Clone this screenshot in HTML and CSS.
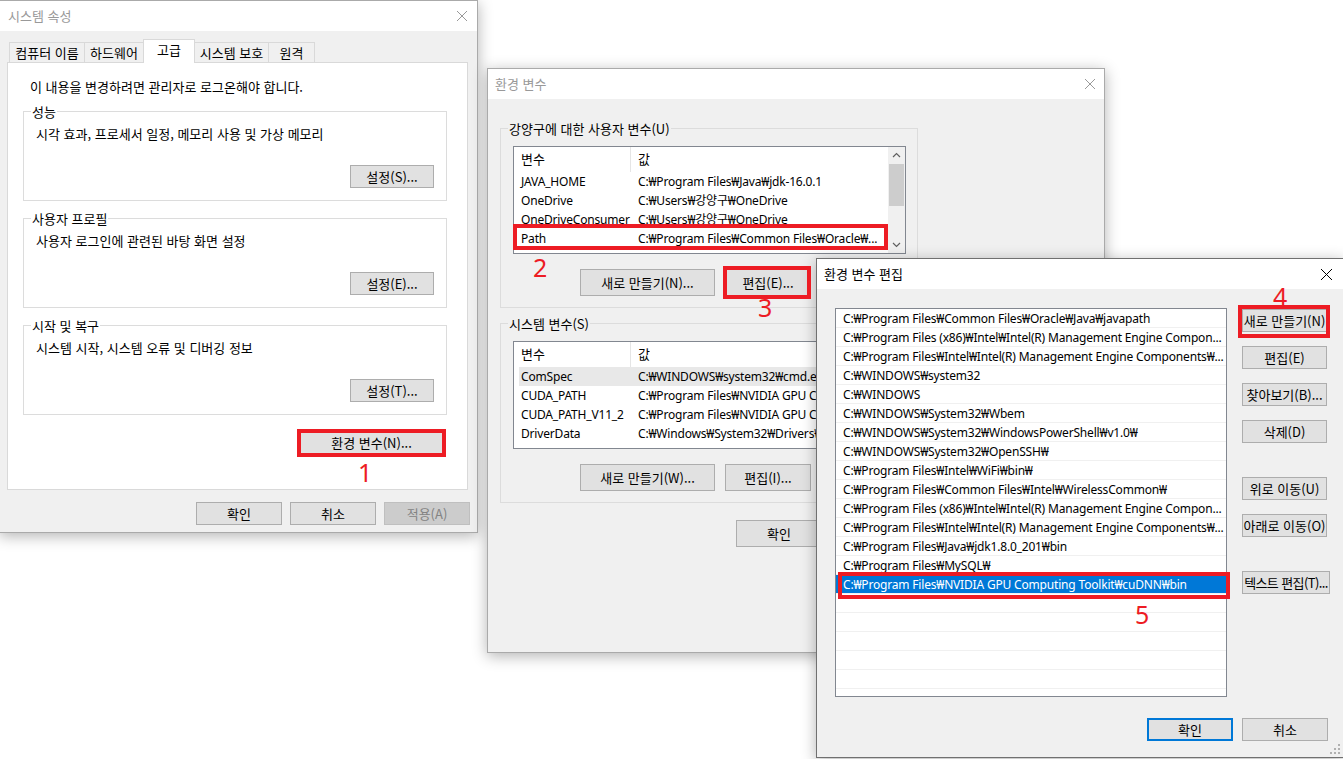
FILE: index.html
```html
<!DOCTYPE html>
<html lang="ko">
<head>
  <meta charset="UTF-8" />
  <title>환경 변수 설정</title>
  <link rel="stylesheet" href="styles.css">
</head>
<body>
<div class="desktop">

  <!-- 시스템 속성 -->
  <div class="window win-system">
    <div class="titlebar">
      <span>시스템 속성</span>
      <svg class="close" width="10" height="10" viewBox="0 0 10 10"><path d="M0 0L10 10M10 0L0 10"/></svg>
    </div>
    <div class="sys-body">
      <div class="tabs">
        <div class="tab tab-name">컴퓨터 이름</div>
        <div class="tab tab-hw">하드웨어</div>
        <div class="tab active">고급</div>
        <div class="tab tab-protect">시스템 보호</div>
        <div class="tab tab-remote">원격</div>
      </div>
      <div class="tab-panel">
        <p class="note">이 내용을 변경하려면 관리자로 로그온해야 합니다.</p>
        <div class="group">
          <span class="group-label">성능</span>
          <div class="group-text">시각 효과, 프로세서 일정, 메모리 사용 및 가상 메모리</div>
          <button class="btn btn-set">설정(S)...</button>
        </div>
        <div class="group">
          <span class="group-label">사용자 프로필</span>
          <div class="group-text">사용자 로그인에 관련된 바탕 화면 설정</div>
          <button class="btn btn-set">설정(E)...</button>
        </div>
        <div class="group">
          <span class="group-label">시작 및 복구</span>
          <div class="group-text">시스템 시작, 시스템 오류 및 디버깅 정보</div>
          <button class="btn btn-set">설정(T)...</button>
        </div>
        <button class="btn btn-env">환경 변수(N)...</button>
      </div>
      <div class="dialog-buttons">
        <button class="btn btn-dlg">확인</button>
        <button class="btn btn-dlg">취소</button>
        <button class="btn btn-dlg" disabled>적용(A)</button>
      </div>
    </div>
  </div>

  <!-- 환경 변수 -->
  <div class="window win-env">
    <div class="titlebar">
      <span>환경 변수</span>
      <svg class="close" width="10" height="10" viewBox="0 0 10 10"><path d="M0 0L10 10M10 0L0 10"/></svg>
    </div>
    <div class="env-body">
      <div class="env-group">
        <span class="group-label">강양구에 대한 사용자 변수(U)</span>
        <div class="listview">
          <div class="lv-main">
            <div class="lv-row lv-head"><span class="lv-name">변수</span><span class="lv-value">값</span></div>
            <div class="lv-row"><span class="lv-name">JAVA_HOME</span><span class="lv-value">C:₩Program Files₩Java₩jdk-16.0.1</span></div>
            <div class="lv-row"><span class="lv-name">OneDrive</span><span class="lv-value">C:₩Users₩강양구₩OneDrive</span></div>
            <div class="lv-row"><span class="lv-name">OneDriveConsumer</span><span class="lv-value">C:₩Users₩강양구₩OneDrive</span></div>
            <div class="lv-row"><span class="lv-name">Path</span><span class="lv-value">C:₩Program Files₩Common Files₩Oracle₩...</span></div>
          </div>
          <div class="scrollbar">
            <svg width="17" height="17" viewBox="0 0 17 17"><path d="M5 10L8.5 6.5L12 10"/></svg>
            <div class="thumb"></div>
            <svg class="down" width="17" height="17" viewBox="0 0 17 17"><path d="M5 7L8.5 10.5L12 7"/></svg>
          </div>
        </div>
        <div class="env-actions">
          <button class="btn btn-new">새로 만들기(N)...</button>
          <button class="btn btn-edit">편집(E)...</button>
        </div>
      </div>

      <div class="env-group">
        <span class="group-label">시스템 변수(S)</span>
        <div class="listview">
          <div class="lv-main">
            <div class="lv-row lv-head"><span class="lv-name">변수</span><span class="lv-value">값</span></div>
            <div class="lv-row hot"><span class="lv-name">ComSpec</span><span class="lv-value">C:₩WINDOWS₩system32₩cmd.exe</span></div>
            <div class="lv-row"><span class="lv-name">CUDA_PATH</span><span class="lv-value">C:₩Program Files₩NVIDIA GPU Computing Toolkit₩CUDA₩v11.2</span></div>
            <div class="lv-row"><span class="lv-name">CUDA_PATH_V11_2</span><span class="lv-value">C:₩Program Files₩NVIDIA GPU Computing Toolkit₩CUDA₩v11.2</span></div>
            <div class="lv-row"><span class="lv-name">DriverData</span><span class="lv-value">C:₩Windows₩System32₩Drivers₩DriverData</span></div>
          </div>
        </div>
        <div class="env-actions">
          <button class="btn btn-new">새로 만들기(W)...</button>
          <button class="btn btn-edit">편집(I)...</button>
        </div>
      </div>

      <div class="env-footer">
        <button class="btn btn-edit">확인</button>
        <button class="btn btn-edit">취소</button>
      </div>
    </div>
  </div>

  <!-- 환경 변수 편집 -->
  <div class="window win-edit">
    <div class="titlebar">
      <span>환경 변수 편집</span>
      <svg class="close" width="11" height="11" viewBox="0 0 11 11"><path d="M0 0L11 11M11 0L0 11"/></svg>
    </div>
    <div class="edit-body">
      <div class="edit-main">
        <div class="path-list">
          <div class="path-row">C:₩Program Files₩Common Files₩Oracle₩Java₩javapath</div>
          <div class="path-row">C:₩Program Files (x86)₩Intel₩Intel(R) Management Engine Compon...</div>
          <div class="path-row">C:₩Program Files₩Intel₩Intel(R) Management Engine Components₩...</div>
          <div class="path-row">C:₩WINDOWS₩system32</div>
          <div class="path-row">C:₩WINDOWS</div>
          <div class="path-row">C:₩WINDOWS₩System32₩Wbem</div>
          <div class="path-row">C:₩WINDOWS₩System32₩WindowsPowerShell₩v1.0₩</div>
          <div class="path-row">C:₩WINDOWS₩System32₩OpenSSH₩</div>
          <div class="path-row">C:₩Program Files₩Intel₩WiFi₩bin₩</div>
          <div class="path-row">C:₩Program Files₩Common Files₩Intel₩WirelessCommon₩</div>
          <div class="path-row">C:₩Program Files (x86)₩Intel₩Intel(R) Management Engine Compon...</div>
          <div class="path-row">C:₩Program Files₩Intel₩Intel(R) Management Engine Components₩...</div>
          <div class="path-row">C:₩Program Files₩Java₩jdk1.8.0_201₩bin</div>
          <div class="path-row">C:₩Program Files₩MySQL₩</div>
          <div class="path-row selected">C:₩Program Files₩NVIDIA GPU Computing Toolkit₩cuDNN₩bin</div>
          <div class="path-row"></div>
          <div class="path-row"></div>
          <div class="path-row"></div>
          <div class="path-row"></div>
          <div class="path-row"></div>
          <div class="path-row"></div>
        </div>
        <div class="edit-actions">
          <button class="btn btn-side">새로 만들기(N)</button>
          <button class="btn btn-side">편집(E)</button>
          <button class="btn btn-side">찾아보기(B)...</button>
          <button class="btn btn-side">삭제(D)</button>
          <button class="btn btn-side spaced">위로 이동(U)</button>
          <button class="btn btn-side">아래로 이동(O)</button>
          <button class="btn btn-side spaced wide">텍스트 편집(T)...</button>
        </div>
      </div>
      <div class="edit-footer">
        <button class="btn btn-dlg default">확인</button>
        <button class="btn btn-dlg">취소</button>
      </div>
    </div>
    <svg class="grip" width="12" height="12" viewBox="0 0 12 12">
      <rect x="9" y="1" width="2" height="2"/><rect x="5" y="5" width="2" height="2"/><rect x="9" y="5" width="2" height="2"/>
      <rect x="1" y="9" width="2" height="2"/><rect x="5" y="9" width="2" height="2"/><rect x="9" y="9" width="2" height="2"/>
    </svg>
  </div>

  <!-- 빨간 표시 -->
  <div class="mark mark-1"></div>
  <div class="mark mark-2"></div>
  <div class="mark mark-3"></div>
  <div class="mark mark-4"></div>
  <div class="mark mark-5"></div>
  <span class="step step-1">1</span>
  <span class="step step-2">2</span>
  <span class="step step-3">3</span>
  <span class="step step-4">4</span>
  <span class="step step-5">5</span>

</div>
</body>
</html>
```

FILE: styles.css
```css
* {
  box-sizing: border-box;
}
body {
  margin: 0;
  background: #fff;
  font-family: "Noto Sans CJK KR", "Noto Sans", sans-serif;
  font-size: 13px;
  line-height: 16px;
  color: #000;
}
.desktop {
  position: relative;
  width: 1343px;
  height: 759px;
  overflow: hidden;
  background: #fff;
}

/* windows */
.window {
  position: absolute;
  display: flex;
  flex-direction: column;
  background: #f0f0f0;
  border: 1px solid #aaa;
  box-shadow: 0 3px 14px rgba(0,0,0,0.3);
}
.win-system {
  left: -1px;
  top: 0;
  width: 479px;
  height: 533px;
}
.win-env {
  left: 487px;
  top: 68px;
  width: 618px;
  height: 585px;
}
.win-edit {
  left: 816px;
  top: 258px;
  width: 528px;
  height: 500px;
  border-color: #707070;
}
.titlebar {
  flex: none;
  height: 30px;
  background: #fff;
  color: #999;
  display: flex;
  align-items: center;
  justify-content: space-between;
  padding: 0 10px 0 8px;
}
.win-env .titlebar {
  padding: 0 9px 0 7px;
}
.win-edit .titlebar {
  color: #000;
  padding: 0 11px 0 7px;
}
.close path {
  stroke: currentColor;
  stroke-width: 1;
  fill: none;
}

/* buttons */
.btn {
  font: inherit;
  height: 23px;
  padding: 0;
  background: #e1e1e1;
  border: 1px solid #adadad;
  color: #000;
  white-space: nowrap;
  overflow: hidden;
}
.btn:disabled {
  background: #cccccc;
  border-color: #bfbfbf;
  color: #838383;
}
.btn.default {
  border: 2px solid #0078d7;
}

/* 시스템 속성 */
.sys-body {
  flex: 1;
  padding: 8px 7px 0 7px;
}
.tabs {
  position: relative;
  z-index: 1;
  display: flex;
  align-items: flex-end;
  height: 23px;
  padding-left: 2px;
}
.tab {
  height: 20px;
  margin-right: -1px;
  border: 1px solid #d9d9d9;
  border-bottom: none;
  background: #f0f0f0;
  text-align: center;
  line-height: 19px;
  white-space: nowrap;
}
.tab-name { width: 76px; }
.tab-hw { width: 60px; }
.tab-protect { width: 75px; }
.tab-remote { width: 47px; }
.tab.active {
  width: 52px;
  height: 24px;
  margin-bottom: -1px;
  background: #fff;
  line-height: 19px;
}
.tab-panel {
  width: 461px;
  height: 428px;
  background: #fff;
  border: 1px solid #d9d9d9;
  padding: 16px 20px 0 15px;
  display: flex;
  flex-direction: column;
}
.note {
  margin: 0 0 0 7px;
}
.group {
  position: relative;
  height: 90px;
  margin-top: 17px;
  border: 1px solid #dcdcdc;
  padding: 14px 12px 12px 12px;
  display: flex;
  flex-direction: column;
}
.note + .group {
  margin-top: 16px;
}
.group-label {
  position: absolute;
  top: -8px;
  left: 7px;
  padding: 0 1px;
  background: #fff;
}
.btn-set {
  width: 84px;
  margin-top: auto;
  align-self: flex-end;
}
.btn-env {
  width: 145px;
  height: 24px;
  margin: 16px 3px 0 0;
  align-self: flex-end;
}
.dialog-buttons {
  display: flex;
  justify-content: flex-end;
  gap: 8px;
  margin-top: 12px;
}
.btn-dlg {
  width: 86px;
}

/* 환경 변수 */
.env-body {
  flex: 1;
  padding: 29px 0 0 12px;
}
.env-group {
  position: relative;
  width: 418px;
  height: 180px;
  border: 1px solid #dcdcdc;
  padding: 17px 0 0 12px;
}
.env-group + .env-group {
  margin-top: 15px;
}
.env-group .group-label {
  background: #f0f0f0;
}
.listview {
  display: flex;
  width: 393px;
  height: 108px;
  background: #fff;
  border: 1px solid #828790;
  overflow: hidden;
}
.lv-main {
  flex: 1;
  min-width: 0;
}
.lv-row,
.path-row {
  font-family: "Noto Sans", "Noto Sans CJK KR", sans-serif;
  font-size: 12px;
  letter-spacing: -0.18px;
}
.lv-row {
  display: flex;
  height: 19px;
  line-height: 19px;
  margin-left: 5px;
  white-space: nowrap;
}
.lv-row.hot {
  background: #e8e8e8;
}
.lv-row.lv-head {
  height: 25px;
  line-height: 24px;
  font-family: "Noto Sans CJK KR", sans-serif;
  font-size: 13px;
  letter-spacing: 0;
}
.lv-name {
  flex: none;
  width: 112px;
  padding-left: 2px;
  overflow: hidden;
}
.lv-head .lv-name {
  border-right: 1px solid #e5e5e5;
}
.lv-value {
  padding-left: 7px;
  overflow: hidden;
}
.scrollbar {
  flex: none;
  width: 17px;
  background: #f0f0f0;
  display: flex;
  flex-direction: column;
}
.scrollbar svg path {
  fill: none;
  stroke: #606060;
  stroke-width: 1.2;
}
.scrollbar .thumb {
  height: 42px;
  margin: 0 1px;
  background: #cdcdcd;
}
.scrollbar .down {
  margin-top: auto;
}
.env-actions {
  display: flex;
  gap: 10px;
  margin-top: 15px;
  padding-left: 67px;
}
.btn-new {
  width: 135px;
  height: 27px;
}
.btn-edit {
  width: 86px;
  height: 27px;
}
.env-footer {
  display: flex;
  gap: 10px;
  margin-top: 17px;
  padding-left: 236px;
}

/* 환경 변수 편집 */
.edit-body {
  flex: 1;
  padding: 19px 0 0 18px;
}
.edit-main {
  display: flex;
  gap: 15px;
}
.path-list {
  width: 392px;
  height: 389px;
  background: #fff;
  border: 1px solid #828790;
  overflow: hidden;
}
.path-row {
  height: 19px;
  line-height: 20px;
  padding-left: 7px;
  border-bottom: 1px solid #f0f0f0;
  white-space: nowrap;
  overflow: hidden;
}
.path-row.selected {
  background: #0078d7;
  color: #fff;
}
.edit-actions {
  display: flex;
  flex-direction: column;
  align-items: flex-start;
  padding-top: 1px;
}
.btn-side {
  width: 85px;
  margin-top: 14px;
}
.btn-side:first-child {
  margin-top: 0;
}
.btn-side.spaced {
  margin-top: 34px;
}
.btn-side.wide {
  width: 88px;
  letter-spacing: -0.6px;
}
.edit-footer {
  display: flex;
  gap: 9px;
  margin-top: 21px;
  padding-left: 312px;
}
.grip {
  position: absolute;
  right: 2px;
  bottom: 2px;
  fill: #b0b0b0;
}

/* annotations */
.mark {
  position: absolute;
  border: 4px solid #ed1c24;
}
.mark-1 { left: 297px; top: 429px; width: 149px; height: 28px; }
.mark-2 { left: 513px; top: 224px; width: 375px; height: 26px; }
.mark-3 { left: 723px; top: 266px; width: 88px; height: 33px; }
.mark-4 { left: 1238px; top: 305px; width: 92px; height: 33px; }
.mark-5 { left: 838px; top: 572px; width: 392px; height: 27px; }
.step {
  position: absolute;
  color: #ed1c24;
  font-family: "Noto Sans", sans-serif;
  font-size: 25px;
  line-height: 25px;
}
.step-1 { left: 358px; top: 460px; }
.step-2 { left: 533px; top: 255px; }
.step-3 { left: 758px; top: 295px; }
.step-4 { left: 1273px; top: 284px; }
.step-5 { left: 1135px; top: 602px; }
```
